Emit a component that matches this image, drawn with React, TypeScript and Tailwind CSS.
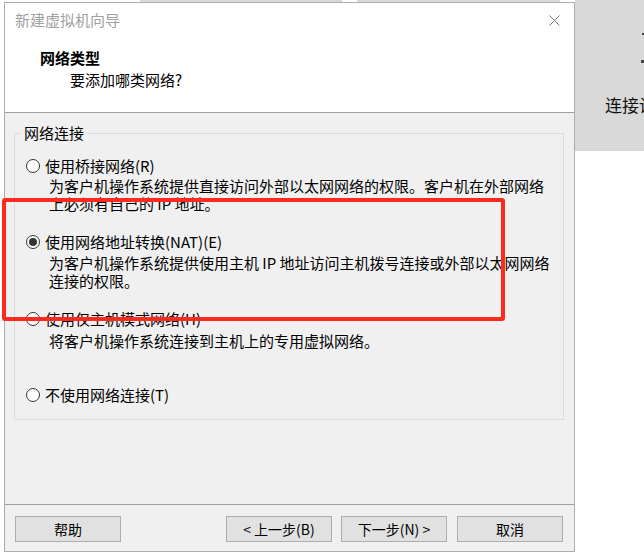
import React from "react";

const font = { fontFamily: '"Noto Sans CJK SC", "Microsoft YaHei", sans-serif' };

const Radio = ({ checked }: { checked?: boolean }) => (
  <span className="w-[14px] h-[14px] rounded-full border border-[#333333] bg-white flex items-center justify-center shrink-0">
    {checked && <span className="w-[8px] h-[8px] rounded-full bg-[#333333]" />}
  </span>
);

const Option = ({
  label,
  checked,
  className,
}: {
  label: string;
  checked?: boolean;
  className: string;
}) => (
  <div className={`flex items-center gap-[5px] h-[20px] pl-[11px] ${className}`}>
    <Radio checked={checked} />
    <span className="leading-[20px]">{label}</span>
  </div>
);

const Desc = ({ lines, className }: { lines: string[]; className: string }) => (
  <div className={`pl-[34px] leading-[18px] ${className}`}>
    {lines.map((l) => (
      <div key={l} className="whitespace-nowrap">
        {l}
      </div>
    ))}
  </div>
);

const Button = ({ children }: { children: React.ReactNode }) => (
  <button className="w-[106px] h-[26px] bg-[#e1e1e1] border border-[#adadad] text-[14px] text-black flex items-center justify-center">
    {children}
  </button>
);

const App = () => {
  return (
    <div className="w-[644px] h-[556px] bg-white relative overflow-hidden flex text-black" style={font}>
      <div className="flex flex-col">
        <div className="flex h-[2px]">
          <div className="w-[140px]" />
          <div className="w-[202px] bg-[#d9d9d9]" />
          <div className="w-[15px]" />
          <div className="w-[203px] bg-[#d9d9d9]" />
        </div>
        <div className="ml-[4px] w-[571px] h-[550px] border border-[#adadad] flex flex-col bg-[#f0f0f0]">
          <div className="h-[110px] bg-white border-b border-[#a0a0a0] flex flex-col">
            <div className="h-[34px] flex items-center justify-between pl-[10px] pr-[14px]">
              <span className="text-[15px] text-[#a0a0a0]">新建虚拟机向导</span>
              <svg width="11" height="11" viewBox="0 0 11 11">
                <path d="M0.5 0.5 L10.5 10.5 M10.5 0.5 L0.5 10.5" stroke="#777" strokeWidth="1" fill="none" />
              </svg>
            </div>
            <div className="mt-[11px] pl-[35px] text-[15px] font-bold leading-[20px]">网络类型</div>
            <div className="mt-[2px] pl-[65px] text-[15px] leading-[20px]">要添加哪类网络?</div>
          </div>

          <div className="flex-1">
            <fieldset className="ml-[9px] mt-[10px] w-[550px] border border-[#dcdcdc] text-[15px] pb-[14px]">
              <legend className="ml-[6px] px-[3px] leading-[20px]">网络连接</legend>
              <Option className="mt-[13px]" label="使用桥接网络(R)" />
              <Desc
                className="mt-[1px]"
                lines={[
                  "为客户机操作系统提供直接访问外部以太网网络的权限。客户机在外部网络",
                  "上必须有自己的 IP 地址。",
                ]}
              />
              <Option className="mt-[19px]" label="使用网络地址转换(NAT)(E)" checked />
              <Desc
                className="mt-[2px]"
                lines={[
                  "为客户机操作系统提供使用主机 IP 地址访问主机拨号连接或外部以太网网络",
                  "连接的权限。",
                ]}
              />
              <Option className="mt-[19px]" label="使用仅主机模式网络(H)" />
              <Desc className="mt-[3px]" lines={["将客户机操作系统连接到主机上的专用虚拟网络。"]} />
              <Option className="mt-[35px]" label="不使用网络连接(T)" />
            </fieldset>
          </div>

          <div className="h-[47px] border-t border-[#a0a0a0] flex items-start pt-[11px] pl-[10px] pr-[11px]">
            <Button>帮助</Button>
            <div className="flex-1" />
            <div className="flex">
              <Button>&lt; 上一步(B)</Button>
              <div className="w-[9px]" />
              <Button>下一步(N) &gt;</Button>
              <div className="w-[10px]" />
              <Button>取消</Button>
            </div>
          </div>
        </div>
      </div>

      <div className="w-[69px] h-[151px] bg-[#d9d9d9] flex flex-col">
        <div className="mt-[33px] ml-[67px] w-[2px] h-[2px] bg-[#444]" />
        <div className="mt-[25px] ml-[66px] w-[3px] h-[3px] bg-[#444]" />
        <div className="mt-[32px] ml-[30px] text-[17px] leading-[20px] whitespace-nowrap text-[#111]">连接设置</div>
      </div>

      <div className="absolute left-[2px] top-[198px] w-[503px] h-[123px] border-4 border-[#ff2a1f] rounded-[3px]" />
    </div>
  );
};

export default App;
